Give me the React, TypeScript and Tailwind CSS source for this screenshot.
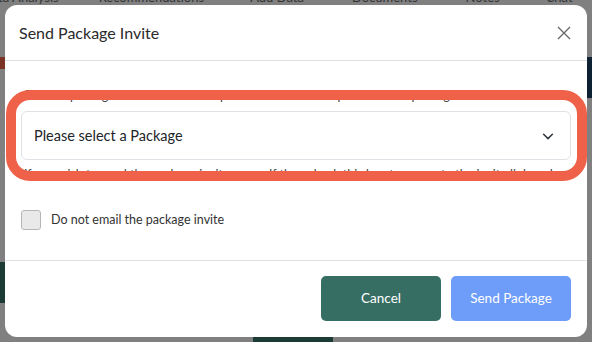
const tabs = [
  { label: "Data Analysis", cls: "ml-[-18px]" },
  { label: "Recommendations", cls: "ml-[40px]" },
  { label: "Add Data", cls: "ml-[46px]" },
  { label: "Documents", cls: "ml-[48px]" },
  { label: "Notes", cls: "ml-[48px]" },
  { label: "Chat", cls: "ml-[46px]" },
];

export default function App() {
  return (
    <div
      className="relative w-[592px] h-[342px] overflow-hidden bg-[#808080]"
      style={{ fontFamily: 'Lato, "Noto Sans", sans-serif' }}
    >
      {/* page behind the backdrop */}
      <div className="flex -mt-[12px] text-[13px] text-[#333] whitespace-nowrap">
        {tabs.map((t) => (
          <span key={t.label} className={t.cls}>
            {t.label}
          </span>
        ))}
      </div>
      <div className="absolute left-0 top-[57px] w-[6px] h-[12px] bg-[#7a3222]" />
      <div className="absolute left-0 top-[262px] w-[6px] h-[41px] bg-[#1d3b35]" />
      <div className="absolute right-0 top-[57px] w-[6px] h-[41px] bg-[#0f2233]" />
      <div className="absolute left-[253px] bottom-0 w-[80px] h-[5px] bg-[#1d3b35]" />

      {/* modal */}
      <div className="absolute left-[5px] top-[5px] w-[582px] h-[332px] bg-white rounded-[12px] flex flex-col">
        <div className="h-[56px] flex items-center justify-between pl-[14px] pr-[16px] border-b border-[#dee2e6]">
          <h2 className="text-[16px] text-[#2a2a2a]">Send Package Invite</h2>
          <svg width="14" height="14" viewBox="0 0 14 14" className="text-[#666]">
            <path d="M1 1L13 13M13 1L1 13" stroke="currentColor" strokeWidth="1.3" />
          </svg>
        </div>

        <div className="flex-1 px-[16px] pt-[26px]">
          <p className="text-[12.5px] text-[#444] leading-[18px] mb-[6px] pl-[3px] whitespace-nowrap">
            Select a package below to send sample client an invite to purchase the package
          </p>
          <div className="h-[49px] border border-[#dee2e6] rounded-[6px] flex items-center justify-between pl-[12px] pr-[15px]">
            <span className="text-[14.5px] text-[#212529]">Please select a Package</span>
            <svg width="14" height="14" viewBox="0 0 16 16" className="text-[#343a40]">
              <path d="M3 6l5 5 5-5" fill="none" stroke="currentColor" strokeWidth="1.8" strokeLinecap="round" strokeLinejoin="round" />
            </svg>
          </div>
          <p className="text-[12.5px] text-[#444] leading-[18px] mt-[6px] pl-[3px] whitespace-nowrap">
            If you wish to send the package invite yourself then check this box to generate the invite link and
          </p>

          <label className="flex items-center gap-[10px] mt-[26px]">
            <span className="w-[20px] h-[20px] rounded-[3px] bg-[#e9e9e9] border border-[#b5b5b5]" />
            <span className="text-[12.5px] text-[#333]">Do not email the package invite</span>
          </label>
        </div>

        <div className="h-[77px] border-t border-[#dee2e6] flex items-center justify-end gap-[10px] pr-[16px] pb-[1px]">
          <button className="w-[120px] h-[45px] rounded-[5px] bg-[#376e64] text-white text-[13.5px]">
            Cancel
          </button>
          <button className="w-[120px] h-[45px] rounded-[5px] bg-[#6e9cf9] text-white text-[13.5px]">
            Send Package
          </button>
        </div>
      </div>

      {/* red annotation */}
      <div className="absolute left-[6px] top-[90px] w-[581px] h-[91px] border-[10px] border-[#ef6149] rounded-[24px]" />
    </div>
  );
}
